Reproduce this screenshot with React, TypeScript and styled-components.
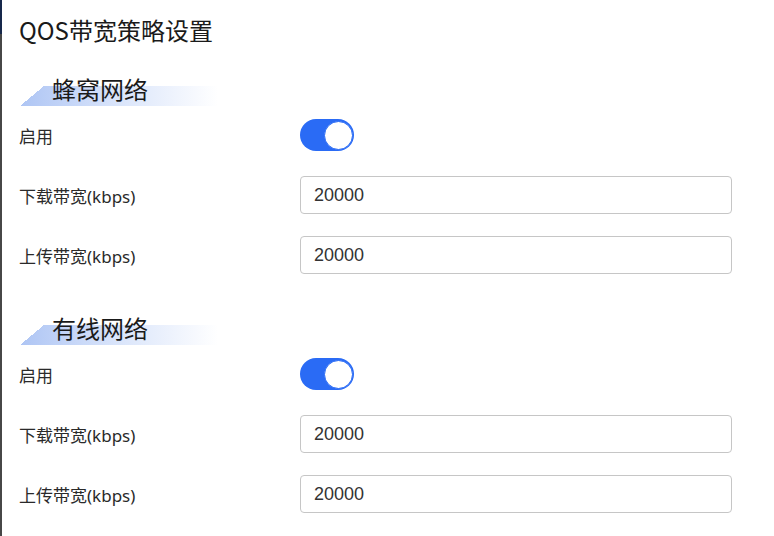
import React, { useState } from 'react';
import styled, { createGlobalStyle } from 'styled-components';

const GlobalStyle = createGlobalStyle`
  html, body {
    margin: 0;
    padding: 0;
    background: #ffffff;
  }
  body {
    font-family: "Noto Sans CJK SC", "Noto Sans", sans-serif;
    color: #1f1f1f;
  }
`;

type NetSection = {
    title: string
    enabled: boolean
    down: string
    up: string
}

const initialSections: NetSection[] = [
    {title: '蜂窝网络', enabled: true, down: '20000', up: '20000'},
    {title: '有线网络', enabled: true, down: '20000', up: '20000'},
];

const Page = styled.div`
  display: flex;
  min-height: 100vh;
`;

const SideEdge = styled.div`
  width: 2px;
  flex-shrink: 0;
  background: linear-gradient(#17284b 0 34px, #474747 34px);
`;

const Content = styled.main`
  flex: 1;
  padding: 14px 0 0 17px;
`;

const Title = styled.h1`
  margin: 0;
  font-size: 24px;
  font-weight: 400;
  line-height: 32px;
  color: #1a1a1a;
`;

const Section = styled.section`
  margin-top: ${props => props.$first ? '30px' : '41px'};
`;

const SectionHead = styled.h2`
  margin: 0 0 10px;
  height: 30px;
  padding-left: 33px;
  font-size: 24px;
  font-weight: 400;
  line-height: 26px;
  color: #1a1a1a;
  background-image:
    linear-gradient(to bottom right, #ffffff 50%, rgba(255, 255, 255, 0) 50%),
    linear-gradient(to right, #aec5f4 0%, #d6e2fa 45%, rgba(255, 255, 255, 0) 100%);
  background-repeat: no-repeat;
  background-size: 24px 20px, 198px 20px;
  background-position: 1px 100%, 1px 100%;
`;

const Rows = styled.div`
  display: grid;
  grid-template-columns: 281px 432px;
  row-gap: 22px;
`;

const Label = styled.label`
  display: flex;
  align-items: center;
  height: 38px;
  font-family: "Noto Sans", "Noto Sans CJK SC", sans-serif;
  font-size: 17px;
  color: #2a2a2a;
`;

const Field = styled.div`
  display: flex;
  align-items: center;
  height: 38px;
`;

const Switch = styled.button`
  display: flex;
  justify-content: ${props => props.$on ? 'flex-end' : 'flex-start'};
  align-items: center;
  width: 54px;
  height: 32px;
  padding: 0 1px;
  border: none;
  border-radius: 16px;
  background: ${props => props.$on ? '#2a6bf5' : '#c8c8c8'};
  cursor: pointer;
`;

const Knob = styled.span`
  width: 29px;
  height: 29px;
  box-sizing: border-box;
  border-radius: 50%;
  background: #ffffff;
  border: 1.5px solid ${props => props.$on ? '#2a6bf5' : '#c8c8c8'};
`;

const Input = styled.input`
  box-sizing: border-box;
  width: 432px;
  height: 38px;
  padding: 0 13px;
  border: 1px solid #c6c6c6;
  border-radius: 4px;
  font-family: "Liberation Sans", Arial, sans-serif;
  font-size: 18px;
  color: #333333;
  outline: none;
`;

export default function App() {
    const [sections, setSections] = useState(initialSections);

    const update = (i: number, patch: Partial<NetSection>) => {
        setSections(prev => prev.map((s, idx) => idx === i ? {...s, ...patch} : s));
    };

    return (
        <Page>
            <GlobalStyle/>
            <SideEdge/>
            <Content>
                <Title>QOS带宽策略设置</Title>
                {sections.map((s, i) => (
                    <Section key={s.title} $first={i === 0}>
                        <SectionHead>{s.title}</SectionHead>
                        <Rows>
                            <Label>启用</Label>
                            <Field>
                                <Switch $on={s.enabled} onClick={() => update(i, {enabled: !s.enabled})}>
                                    <Knob $on={s.enabled}/>
                                </Switch>
                            </Field>
                            <Label>下载带宽(kbps)</Label>
                            <Field>
                                <Input value={s.down} onChange={e => update(i, {down: e.target.value})}/>
                            </Field>
                            <Label>上传带宽(kbps)</Label>
                            <Field>
                                <Input value={s.up} onChange={e => update(i, {up: e.target.value})}/>
                            </Field>
                        </Rows>
                    </Section>
                ))}
            </Content>
        </Page>
    );
}
